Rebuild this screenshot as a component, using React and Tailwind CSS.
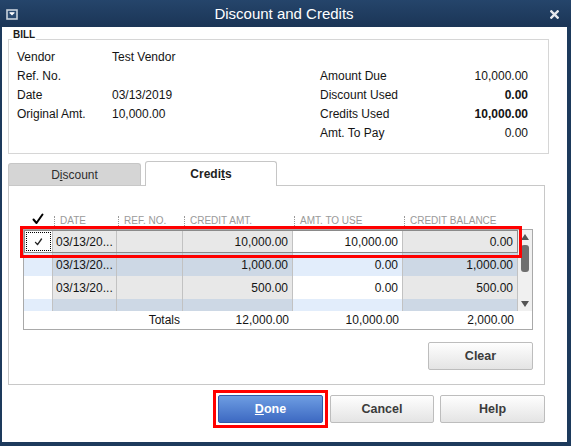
import React from "react";

const rows = [
  { date: "03/13/20...", credit: "10,000.00", use: "10,000.00", bal: "0.00", checked: true },
  { date: "03/13/20...", credit: "1,000.00", use: "0.00", bal: "1,000.00" },
  { date: "03/13/20...", credit: "500.00", use: "0.00", bal: "500.00" },
  { date: "", credit: "", use: "", bal: "" },
];

const cols = "grid grid-cols-[29px_64px_66px_110px_110px_115px]";

function Check({ className }) {
  return (
    <svg viewBox="0 0 12 12" className={className}>
      <path d="M1.5 6.5 L4.5 10 L10.5 1.5" fill="none" stroke="currentColor" strokeWidth="2" strokeLinecap="round" strokeLinejoin="round" />
    </svg>
  );
}

function CreditRow({ row, index }) {
  const odd = index % 2 === 0;
  const gray = odd ? "bg-[#e8e8e8]" : "bg-[#cdd8e5]";
  const edit = odd ? "bg-white" : "bg-[#e2edfb]";
  const cell = "border-r border-[#c2c2c2] flex items-center";
  return (
    <div
      className={`${cols} h-[23px] shrink-0 text-[12px] text-[#141414] ${
        row.checked ? "outline outline-[#8a8a8a] -outline-offset-1" : ""
      }`}
    >
      <div className={`${cell} ${edit} justify-center`}>
        {row.checked && (
          <div className="w-[25px] h-[19px] border border-dotted border-black flex items-center justify-center">
            <Check className="w-[9px] h-[8px] text-[#222]" />
          </div>
        )}
      </div>
      <div className={`${cell} ${gray} pl-[3px]`}>{row.date}</div>
      <div className={`${cell} ${gray}`}></div>
      <div className={`${cell} ${gray} justify-end pr-[4px]`}>{row.credit}</div>
      <div className={`${cell} ${edit} justify-end pr-[4px]`}>{row.use}</div>
      <div className={`${cell} ${gray} justify-end pr-[4px]`}>{row.bal}</div>
    </div>
  );
}

function HeaderCell({ children }) {
  return (
    <div className="flex items-center">
      <div className="h-[10px] border-l border-dotted border-[#9a9a9a] ml-[2px] pl-[5px] text-[10px] leading-[10px] text-[#9a9a9a] whitespace-nowrap">
        {children}
      </div>
    </div>
  );
}

function Button({ children, className = "" }) {
  return (
    <button
      type="button"
      className={`h-[28px] rounded-[2px] border border-[#bdbdbd] bg-linear-to-b from-[#fefefe] to-[#e4e4e4] text-[12.5px] font-bold text-[#3b3b3b] ${className}`}
    >
      {children}
    </button>
  );
}

export default function App() {
  return (
    <div className="w-[571px] h-[446px] flex flex-col bg-white font-['Liberation_Sans',Arial,sans-serif] text-[#141414] overflow-hidden">
      {/* title bar */}
      <div className="h-[27px] shrink-0 flex items-center bg-linear-to-b from-[#25456b] to-[#1b3556] px-[6px]">
        <svg viewBox="0 0 12 11" className="w-[12px] h-[11px] mt-[1px]">
          <rect x="1" y="1" width="10" height="9" fill="#2a4a70" stroke="#c9d2dc" strokeWidth="1.6" />
          <path d="M3.5 4 H8.5 L6 6.5 Z" fill="#ffffff" />
          <rect x="3.5" y="3.2" width="5" height="1" fill="#ffffff" />
        </svg>
        <div className="flex-1 text-center text-white text-[15px] leading-none">Discount and Credits</div>
        <svg viewBox="0 0 10 10" className="w-[9px] h-[9px] mr-[6px] mt-[1px]">
          <path d="M1.5 1.5 L8.5 8.5 M8.5 1.5 L1.5 8.5" stroke="#e6e9ee" strokeWidth="2.6" strokeLinecap="square" />
        </svg>
      </div>

      {/* body */}
      <div className="flex-1 flex flex-col border-l-2 border-r-4 border-b-4 border-[#1d3a5c]">
        {/* bill box */}
        <div className="relative ml-[6px] mt-[12px] w-[541px] h-[115px] shrink-0 border border-[#d6d6d6] pt-[7px] pl-[8px] flex text-[12px]">
          <span className="absolute left-[3px] -top-[11px] px-[1px] bg-white text-[10px] leading-[12px] font-bold text-[#1a1a1a]">
            BILL
          </span>
          <div className="w-[303px] grid grid-cols-[95px_1fr] auto-rows-[19px] items-center content-start">
            <span>Vendor</span>
            <span>Test Vendor</span>
            <span>Ref. No.</span>
            <span></span>
            <span>Date</span>
            <span>03/13/2019</span>
            <span>Original Amt.</span>
            <span>10,000.00</span>
          </div>
          <div className="w-[208px] mt-[19px] grid grid-cols-[1fr_auto] auto-rows-[19px] items-center content-start">
            <span>Amount Due</span>
            <span className="text-right">10,000.00</span>
            <span>Discount Used</span>
            <span className="text-right font-bold">0.00</span>
            <span>Credits Used</span>
            <span className="text-right font-bold">10,000.00</span>
            <span>Amt. To Pay</span>
            <span className="text-right">0.00</span>
          </div>
        </div>

        {/* tabs */}
        <div className="ml-[6px] mt-[7px] flex items-end gap-[4px] relative z-10">
          <div className="w-[133px] h-[22px] rounded-t-[3px] border border-b-0 border-[#c6c6c6] bg-[#d5d5d5] flex items-center justify-center text-[12px] text-[#2e2e2e]">
            D<span className="underline">i</span>scount
          </div>
          <div className="w-[132px] h-[25px] -mb-px rounded-t-[3px] border border-b-0 border-[#c6c6c6] bg-white flex items-center justify-center text-[12px] font-bold text-[#1e1e1e]">
            Credi<span className="underline">t</span>s
          </div>
        </div>

        {/* tab panel */}
        <div className="ml-[6px] w-[537px] h-[200px] shrink-0 border border-[#c8c8c8] pt-[26px] pl-[14px]">
          <div className="w-[510px]">
            {/* header */}
            <div className={`${cols} h-[17px]`}>
              <div className="flex items-start justify-center pt-[1px]">
                <Check className="w-[12px] h-[12px] text-black" />
              </div>
              <HeaderCell>DATE</HeaderCell>
              <HeaderCell>REF. NO.</HeaderCell>
              <HeaderCell>CREDIT AMT.</HeaderCell>
              <HeaderCell>AMT. TO USE</HeaderCell>
              <HeaderCell>CREDIT BALANCE</HeaderCell>
            </div>

            {/* table */}
            <div className="relative border border-[#a9a9a9]">
              <div className="flex h-[81px]">
                <div className="w-[494px] flex flex-col overflow-hidden">
                  {rows.map((r, i) => (
                    <CreditRow key={i} row={r} index={i} />
                  ))}
                </div>
                <div className="w-[14px] bg-[#f0f0f0] flex flex-col">
                  <div className="h-[14px] flex items-center justify-center">
                    <svg viewBox="0 0 8 6" className="w-[8px] h-[6px]">
                      <path d="M0 6 L4 0 L8 6 Z" fill="#555" />
                    </svg>
                  </div>
                  <div className="flex-1">
                    <div className="w-[8px] h-[27px] mx-auto mt-[1px] rounded-[3px] bg-[#6f6f6f]"></div>
                  </div>
                  <div className="h-[14px] flex items-center justify-center">
                    <svg viewBox="0 0 8 6" className="w-[8px] h-[6px]">
                      <path d="M0 0 L8 0 L4 6 Z" fill="#555" />
                    </svg>
                  </div>
                </div>
              </div>
              <div className={`${cols} h-[18px] items-center text-[12px] bg-white`}>
                <span className="col-span-3 text-right pr-[3px]">Totals</span>
                <span className="text-right pr-[4px]">12,000.00</span>
                <span className="text-right pr-[4px]">10,000.00</span>
                <span className="text-right pr-[4px]">2,000.00</span>
              </div>
              {/* highlight around selected row */}
              <div className="absolute -left-[4px] -top-[4px] w-[502px] h-[32px] border-[3px] border-[#ff0000] pointer-events-none"></div>
            </div>

            <div className="flex justify-end mt-[12px]">
              <Button className="w-[105px] h-[27px]">Clear</Button>
            </div>
          </div>
        </div>

        {/* bottom buttons */}
        <div className="mt-[5px] flex justify-end items-center pr-[22px]">
          <div className="border-[3px] border-[#ff0000] p-[2px]">
            <button
              type="button"
              className="w-[105px] h-[28px] rounded-[2px] border border-[#2f5aa8] bg-linear-to-b from-[#6e9de2] to-[#3d69c2] text-[12.5px] font-bold text-white"
            >
              <span className="underline">D</span>one
            </button>
          </div>
          <Button className="w-[104px] ml-[2px]">Cancel</Button>
          <Button className="w-[105px] ml-[6px]">Help</Button>
        </div>
      </div>
    </div>
  );
}
